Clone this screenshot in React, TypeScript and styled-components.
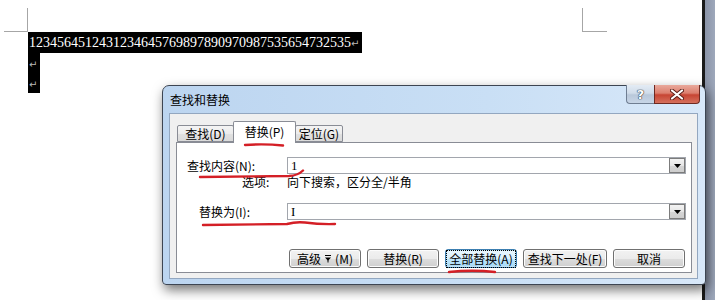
import styled, { createGlobalStyle } from "styled-components";

const CJK = `"Noto Sans CJK SC", "Liberation Sans", sans-serif`;

const GlobalStyle = createGlobalStyle`
  html, body {
    margin: 0;
    padding: 0;
    background: #ffffff;
  }
  body {
    width: 715px;
    height: 300px;
    overflow: hidden;
    font-family: ${CJK};
  }
`;

const DIGITS = "1234564512431234645769897890970987535654732535";

const TABS = [
  { label: "查找(D)", width: 57 },
  { label: "替换(P)", width: 63, active: true },
  { label: "定位(G)", width: 48 },
];

function MoreArrow() {
  return (
    <svg width="8" height="9" viewBox="0 0 8 9">
      <path d="M1 1.5h6" stroke="#000" strokeWidth="1" />
      <path d="M1 3.5h6l-3 3.2z" fill="#000" />
      <path d="M4 6v2.5" stroke="#000" strokeWidth="1" />
    </svg>
  );
}

function DropArrow() {
  return (
    <svg width="7" height="4" viewBox="0 0 7 4">
      <path d="M0 0h7L3.5 4z" fill="#000" />
    </svg>
  );
}

function CloseGlyph() {
  return (
    <svg width="14" height="11" viewBox="0 0 14 11">
      <path
        d="M2 1.5 L12 9.5 M12 1.5 L2 9.5"
        stroke="#5a1d16"
        strokeWidth="4"
        strokeLinecap="round"
      />
      <path
        d="M2 1.5 L12 9.5 M12 1.5 L2 9.5"
        stroke="#ffffff"
        strokeWidth="2.2"
        strokeLinecap="round"
      />
    </svg>
  );
}

export default function App() {
  return (
    <>
      <GlobalStyle />
      <Screen>
        <Page>
          <MarksRow>
            <CornerLeft />
            <CornerRight />
          </MarksRow>
          <DocLine $height={21}>
            <Selection>
              {DIGITS}
              <ParaMark>↵</ParaMark>
            </Selection>
          </DocLine>
          <DocLine $height={20}>
            <Selection>
              <ParaMark>↵</ParaMark>
            </Selection>
          </DocLine>
          <DocLine $height={20}>
            <Selection>
              <ParaMark>↵</ParaMark>
            </Selection>
          </DocLine>
        </Page>
        <PageEdge />
        <Gutter />

        <Dialog>
          <TitleBar>
            <Title>查找和替换</Title>
            <CaptionButtons>
              <HelpButton>?</HelpButton>
              <CloseButton>
                <CloseGlyph />
              </CloseButton>
            </CaptionButtons>
          </TitleBar>
          <Client>
            <TabStrip>
              {TABS.map((tab) => (
                <Tab key={tab.label} $active={!!tab.active} $width={tab.width}>
                  {tab.label}
                </Tab>
              ))}
            </TabStrip>
            <Panel>
              <FieldRow>
                <Label $indent={10}>查找内容(N):</Label>
                <Combo>
                  <ComboValue>1</ComboValue>
                  <ComboButton>
                    <DropArrow />
                  </ComboButton>
                </Combo>
              </FieldRow>
              <OptionsRow>
                <Label $indent={65}>选项:</Label>
                <OptionText>向下搜索，区分全/半角</OptionText>
              </OptionsRow>
              <FieldRow $top={13}>
                <Label $indent={22}>替换为(I):</Label>
                <Combo>
                  <ComboValue>I</ComboValue>
                  <ComboButton>
                    <DropArrow />
                  </ComboButton>
                </Combo>
              </FieldRow>
              <ButtonRow>
                <Button $width={72}>
                  高级 <MoreArrow /> (M)
                </Button>
                <Button $width={72}>替换(R)</Button>
                <Button $width={72} $default>
                  <FocusRing>全部替换(A)</FocusRing>
                </Button>
                <Button $width={84}>查找下一处(F)</Button>
                <Button $width={72}>取消</Button>
              </ButtonRow>
            </Panel>
          </Client>
        </Dialog>

        <Annotations viewBox="0 0 715 300">
          <path d="M245 145 Q264 143.5 283 145.5" />
          <path d="M200 177 L289 176 Q298 175.5 303 170.5" />
          <path d="M203 225 L287 224 Q296 221.5 305 222.5 Q320 224.5 335 224" />
          <path d="M449 272 Q472 269.5 495 272" />
        </Annotations>
      </Screen>
    </>
  );
}

const Screen = styled.div`
  position: relative;
  width: 715px;
  height: 300px;
  display: flex;
  overflow: hidden;
  background: #ffffff;
`;

const Page = styled.div`
  width: 702px;
  height: 300px;
  background: #ffffff;
  display: flex;
  flex-direction: column;
`;

const MarksRow = styled.div`
  height: 32px;
  display: flex;
  align-items: flex-start;
  padding-top: 8px;
  box-sizing: border-box;
`;

const CornerLeft = styled.div`
  margin-left: 4px;
  width: 23px;
  height: 23px;
  border-right: 1px solid #a6a6a6;
  border-bottom: 1px solid #a6a6a6;
`;

const CornerRight = styled.div`
  margin-left: 554px;
  width: 24px;
  height: 23px;
  border-left: 1px solid #a6a6a6;
  border-bottom: 1px solid #a6a6a6;
`;

const DocLine = styled.div<{ $height: number }>`
  height: ${(p) => p.$height}px;
  display: flex;
  padding-left: 28px;
`;

const Selection = styled.span`
  display: inline-block;
  background: #000000;
  color: #ffffff;
  font-family: "Liberation Serif", serif;
  font-size: 14px;
  line-height: 21px;
  padding-left: 1px;
  white-space: nowrap;
`;

const ParaMark = styled.span`
  color: #b8b8b8;
  font-family: "DejaVu Sans", sans-serif;
  font-size: 10px;
  display: inline-block;
  width: 11px;
`;

const PageEdge = styled.div`
  width: 3px;
  height: 300px;
  background: #1a1a1a;
`;

const Gutter = styled.div`
  flex: 1;
  height: 300px;
  background: linear-gradient(to right, #8b94a8, #9ea8bb);
`;

const Dialog = styled.div`
  position: absolute;
  left: 162px;
  top: 85px;
  width: 544px;
  height: 200px;
  box-sizing: border-box;
  border: 1px solid #3d4552;
  border-radius: 7px 7px 4px 4px;
  background: linear-gradient(to right, #bcd5f0 0%, #c9dff5 60%, #d8e8f9 100%);
  box-shadow: 2px 5px 12px rgba(0, 0, 0, 0.55);
  padding: 0 7px 5px 6px;
  display: flex;
  flex-direction: column;
  font-family: ${CJK};
  z-index: 2;
`;

const TitleBar = styled.div`
  height: 27px;
  display: flex;
  align-items: center;
  padding-left: 1px;
`;

const Title = styled.div`
  font-size: 12px;
  line-height: 14px;
  color: #000000;
  margin-top: 1px;
`;

const CaptionButtons = styled.div`
  margin-left: auto;
  margin-right: -2px;
  align-self: flex-start;
  margin-top: -1px;
  display: flex;
`;

const HelpButton = styled.div`
  width: 28px;
  height: 19px;
  box-sizing: border-box;
  border: 1px solid #6f7e92;
  border-top: none;
  border-right: none;
  border-radius: 0 0 0 4px;
  background: linear-gradient(#e3ebf4 0%, #d0dcea 45%, #b9c8da 55%, #c7d5e6 100%);
  display: flex;
  align-items: center;
  justify-content: center;
  font-family: "DejaVu Sans", sans-serif;
  font-weight: bold;
  font-size: 13px;
  color: #ffffff;
  text-shadow: 0 0 1px #2c3543, 0 0 1px #2c3543, 0 0 1px #2c3543;
`;

const CloseButton = styled.div`
  width: 46px;
  height: 19px;
  box-sizing: border-box;
  border: 1px solid #6e2a22;
  border-top: none;
  border-radius: 0 0 4px 0;
  background: linear-gradient(#e9a99c 0%, #dc7f6e 45%, #c74533 55%, #d5705d 100%);
  display: flex;
  align-items: center;
  justify-content: center;
`;

const Client = styled.div`
  flex: 1;
  background: #f0f0f0;
  border: 1px solid #93a7c0;
  padding: 7px 5px 5px 6px;
  display: flex;
  flex-direction: column;
`;

const TabStrip = styled.div`
  height: 21px;
  display: flex;
  align-items: flex-end;
  padding-left: 1px;
  position: relative;
  z-index: 1;
`;

const Tab = styled.div<{ $active: boolean; $width: number }>`
  width: ${(p) => p.$width}px;
  height: ${(p) => (p.$active ? 22 : 17)}px;
  margin-bottom: ${(p) => (p.$active ? -1 : 0)}px;
  box-sizing: border-box;
  border: 1px solid #898c95;
  border-bottom: ${(p) => (p.$active ? "none" : "1px solid #898c95")};
  margin-left: ${(p) => (p.$active ? -1 : 0)}px;
  margin-right: ${(p) => (p.$active ? -1 : 0)}px;
  position: relative;
  z-index: ${(p) => (p.$active ? 2 : 1)};
  border-radius: 2px 2px 0 0;
  background: ${(p) =>
    p.$active
      ? "#ffffff"
      : "linear-gradient(#f4f4f4 0%, #ececec 50%, #e1e1e1 51%, #dadada 100%)"};
  display: flex;
  align-items: ${(p) => (p.$active ? "flex-start" : "center")};
  padding-top: ${(p) => (p.$active ? 3 : 0)}px;
  justify-content: center;
  font-size: 12px;
  line-height: 14px;
  color: #000000;
`;

const Panel = styled.div`
  flex: 1;
  background: #ffffff;
  border: 1px solid #898c95;
  padding: 14px 5px 4px 0;
  display: flex;
  flex-direction: column;
`;

const FieldRow = styled.div<{ $top?: number }>`
  display: grid;
  grid-template-columns: 110px 1fr;
  align-items: center;
  height: 17px;
  margin-top: ${(p) => p.$top ?? 0}px;
`;

const OptionsRow = styled.div`
  display: grid;
  grid-template-columns: 110px 1fr;
  align-items: center;
  height: 16px;
`;

const Label = styled.div<{ $indent: number }>`
  padding-left: ${(p) => p.$indent}px;
  font-size: 12px;
  line-height: 14px;
  color: #000000;
  white-space: nowrap;
`;

const OptionText = styled.div`
  font-size: 12px;
  line-height: 14px;
  color: #000000;
  white-space: nowrap;
`;

const Combo = styled.div`
  height: 17px;
  box-sizing: border-box;
  border: 1px solid #a2a6ad;
  background: #ffffff;
  display: flex;
  align-items: center;
`;

const ComboValue = styled.div`
  flex: 1;
  padding-left: 3px;
  font-family: "Liberation Serif", serif;
  font-size: 13px;
  line-height: 15px;
  color: #000000;
`;

const ComboButton = styled.div`
  width: 16px;
  height: 15px;
  box-sizing: border-box;
  border: 1px solid #7c7c7c;
  background: linear-gradient(#f3f3f3 0%, #e6e6e6 50%, #d6d6d6 51%, #cdcdcd 100%);
  display: flex;
  align-items: center;
  justify-content: center;
  padding-top: 1px;
`;

const ButtonRow = styled.div`
  margin-top: 29px;
  display: flex;
  justify-content: flex-end;
  gap: 6px;
  padding-right: 1px;
`;

const Button = styled.div<{ $width: number; $default?: boolean }>`
  width: ${(p) => p.$width}px;
  height: 19px;
  box-sizing: border-box;
  border: 1px solid ${(p) => (p.$default ? "#3c7fb1" : "#707070")};
  border-radius: 3px;
  background: ${(p) =>
    p.$default
      ? "linear-gradient(#eaf6fd 0%, #d9f0fc 50%, #bee6fd 51%, #a7d9f5 100%)"
      : "linear-gradient(#f2f2f2 0%, #ebebeb 50%, #dddddd 51%, #cfcfcf 100%)"};
  box-shadow: inset 0 0 0 1px ${(p) => (p.$default ? "#c2e4f6" : "#fcfcfc")};
  display: flex;
  align-items: center;
  justify-content: center;
  gap: 3px;
  font-size: 12px;
  line-height: 14px;
  color: #000000;
  white-space: nowrap;
`;

const FocusRing = styled.span`
  outline: 1px dotted #000000;
  outline-offset: 1px;
  padding: 0 1px;
`;

const Annotations = styled.svg`
  position: absolute;
  left: 0;
  top: 0;
  width: 715px;
  height: 300px;
  pointer-events: none;
  z-index: 5;
  fill: none;
  stroke: #d41f26;
  stroke-width: 2.4;
  stroke-linecap: round;
  stroke-linejoin: round;
`;
